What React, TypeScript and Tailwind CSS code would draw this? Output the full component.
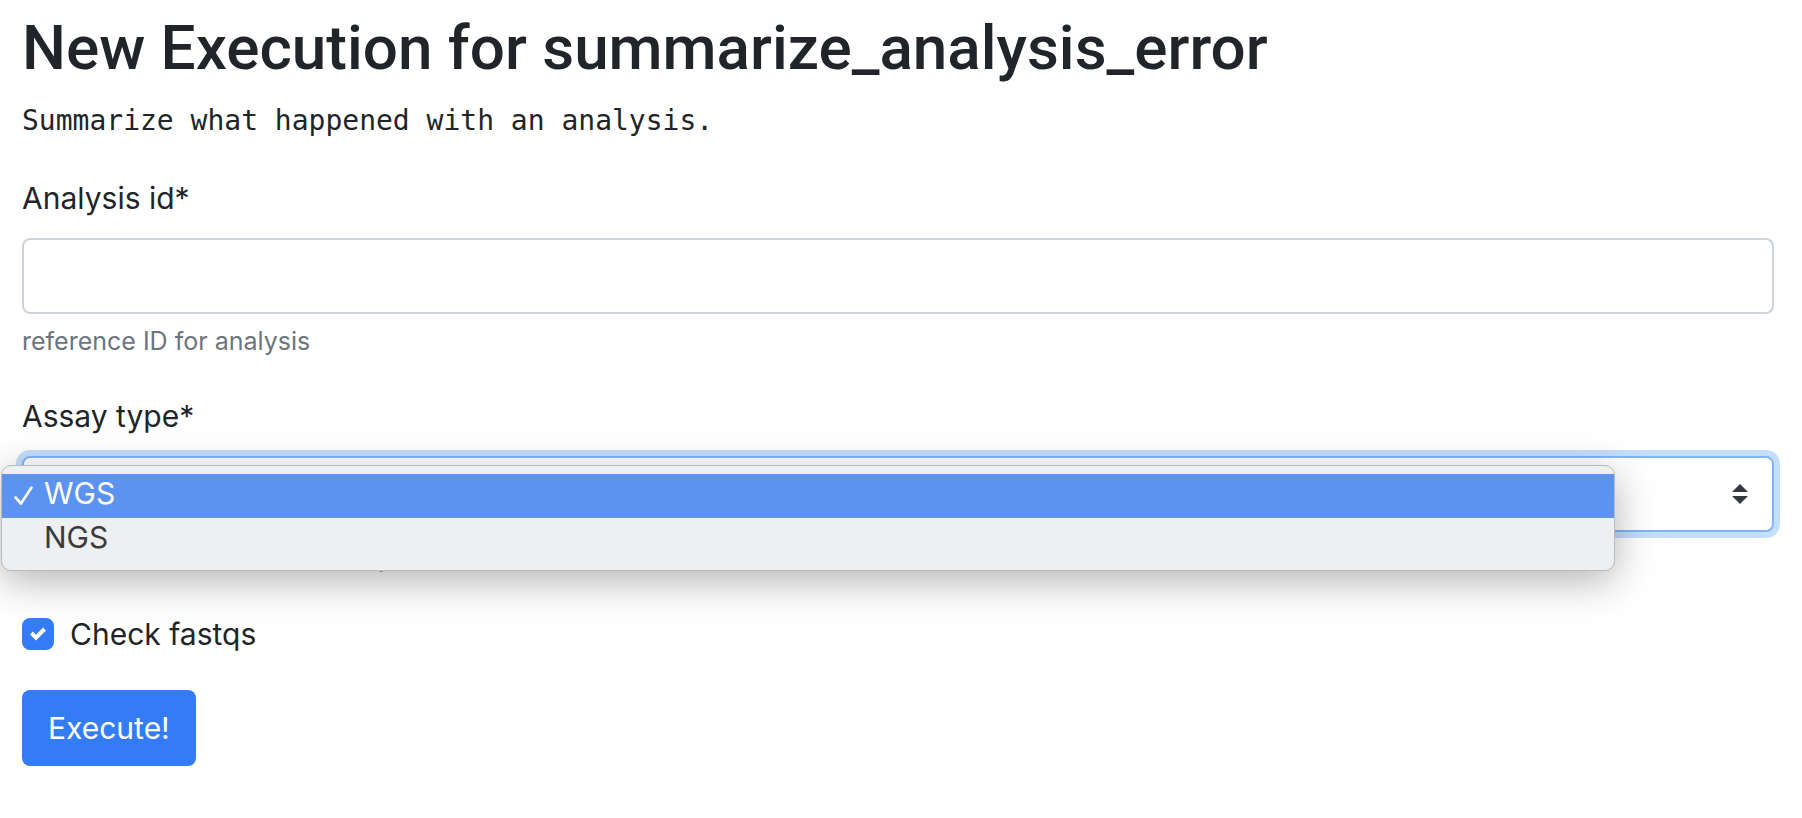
import React, { useState } from "react";

const assayTypes = ["WGS", "NGS"];

export default function App() {
  const [analysisId, setAnalysisId] = useState("");
  const [assay, setAssay] = useState("WGS");
  const [menuOpen, setMenuOpen] = useState(true);
  const [checkFastqs, setCheckFastqs] = useState(true);

  const choose = (type: string) => {
    setAssay(type);
    setMenuOpen(false);
  };

  return (
    <main className="min-h-screen bg-white pt-2 pr-7 pb-12 pl-[22px] font-['Inter',sans-serif] text-[30px] leading-12 text-[#212529]">
      <h1 className="mb-3 font-['Roboto',sans-serif] text-[62px] leading-20 font-medium">New Execution for summarize_analysis_error</h1>
      <pre className="mb-8 font-['DejaVu_Sans_Mono',monospace] text-[28px] leading-[42px]">Summarize what happened with an analysis.</pre>

      <form onSubmit={(e) => e.preventDefault()}>
        <div className="mb-8">
          <label htmlFor="analysis-id" className="mb-4 block">Analysis id*</label>
          <input
            id="analysis-id"
            type="text"
            value={analysisId}
            onChange={(e) => setAnalysisId(e.target.value)}
            aria-describedby="analysis-id-help"
            className="block h-[76px] w-full rounded-lg border-2 border-[#ced4da] bg-white px-6 outline-none"
          />
          <small id="analysis-id-help" className="mt-2 block text-[25px] leading-[38px] text-[#6c757d]">reference ID for analysis</small>
        </div>

        <div className="mb-8">
          <label htmlFor="assay-type" className="mb-4 block">Assay type*</label>
          <div className="relative">
            <select
              id="assay-type"
              value={menuOpen ? "" : assay}
              onChange={(e) => choose(e.target.value)}
              aria-describedby="assay-type-help"
              className="block h-[76px] w-full appearance-none rounded-lg border-2 border-[#80b5f8] bg-white px-6 shadow-[0_0_0_6px_#c4defd] outline-none"
            >
              <option value="" hidden />
              {assayTypes.map((t) => (
                <option key={t} value={t}>{t}</option>
              ))}
            </select>
            <svg viewBox="0 0 16 20" className="pointer-events-none absolute top-7 right-[26px] h-5 w-4" fill="#343a40" aria-hidden="true">
              <path d="M8 0 16 8H0zM8 20 0 12h16z" />
            </svg>
            {menuOpen && (
              <div
                role="listbox"
                aria-label="Assay type"
                className="absolute top-[9px] right-[159px] -left-[21px] overflow-hidden rounded-[10px] border border-[#b9babb] bg-[#eeeff1] py-2 shadow-[0_10px_40px_rgba(0,0,0,0.3)]"
              >
                {assayTypes.map((t) => (
                  <div
                    key={t}
                    role="option"
                    aria-selected={t === assay}
                    onClick={() => choose(t)}
                    className={
                      t === assay
                        ? "flex h-11 items-start bg-[#5c92f0] pl-3 leading-[38px] text-white"
                        : "flex h-11 items-start pl-3 leading-[38px] text-[#3a3b3c]"
                    }
                  >
                    <svg viewBox="0 0 20 20" className="mt-3 mr-[10px] size-5" fill="none" stroke="currentColor" strokeWidth="2.6" strokeLinecap="round" strokeLinejoin="round" aria-hidden="true">
                      {t === assay && <path d="M1.5 11.5 7 17.5 17.5 1.5" />}
                    </svg>
                    {t}
                  </div>
                ))}
              </div>
            )}
          </div>
          <small id="assay-type-help" className="mt-2 block text-[25px] leading-[38px] text-[#6c757d]">Kind of data (WGS or NGS run)</small>
        </div>

        <label className="mb-8 flex items-center">
          <span className="relative mr-4 size-8">
            <input
              type="checkbox"
              checked={checkFastqs}
              onChange={(e) => setCheckFastqs(e.target.checked)}
              className="block size-8 appearance-none rounded-lg border-2 border-[#adb5bd] checked:border-[#347cf6] checked:bg-[#347cf6]"
            />
            {checkFastqs && (
              <svg viewBox="0 0 8 8" className="pointer-events-none absolute top-2 left-2 size-4" fill="#fff" aria-hidden="true">
                <path d="M6.564.75l-3.59 3.612-1.538-1.55L0 4.26l2.974 2.99L8 2.193z" />
              </svg>
            )}
          </span>
          Check fastqs
        </label>

        <button type="submit" className="flex h-[76px] items-center rounded-lg bg-[#347cf6] px-[26px] text-white">Execute!</button>
      </form>
    </main>
  );
}
